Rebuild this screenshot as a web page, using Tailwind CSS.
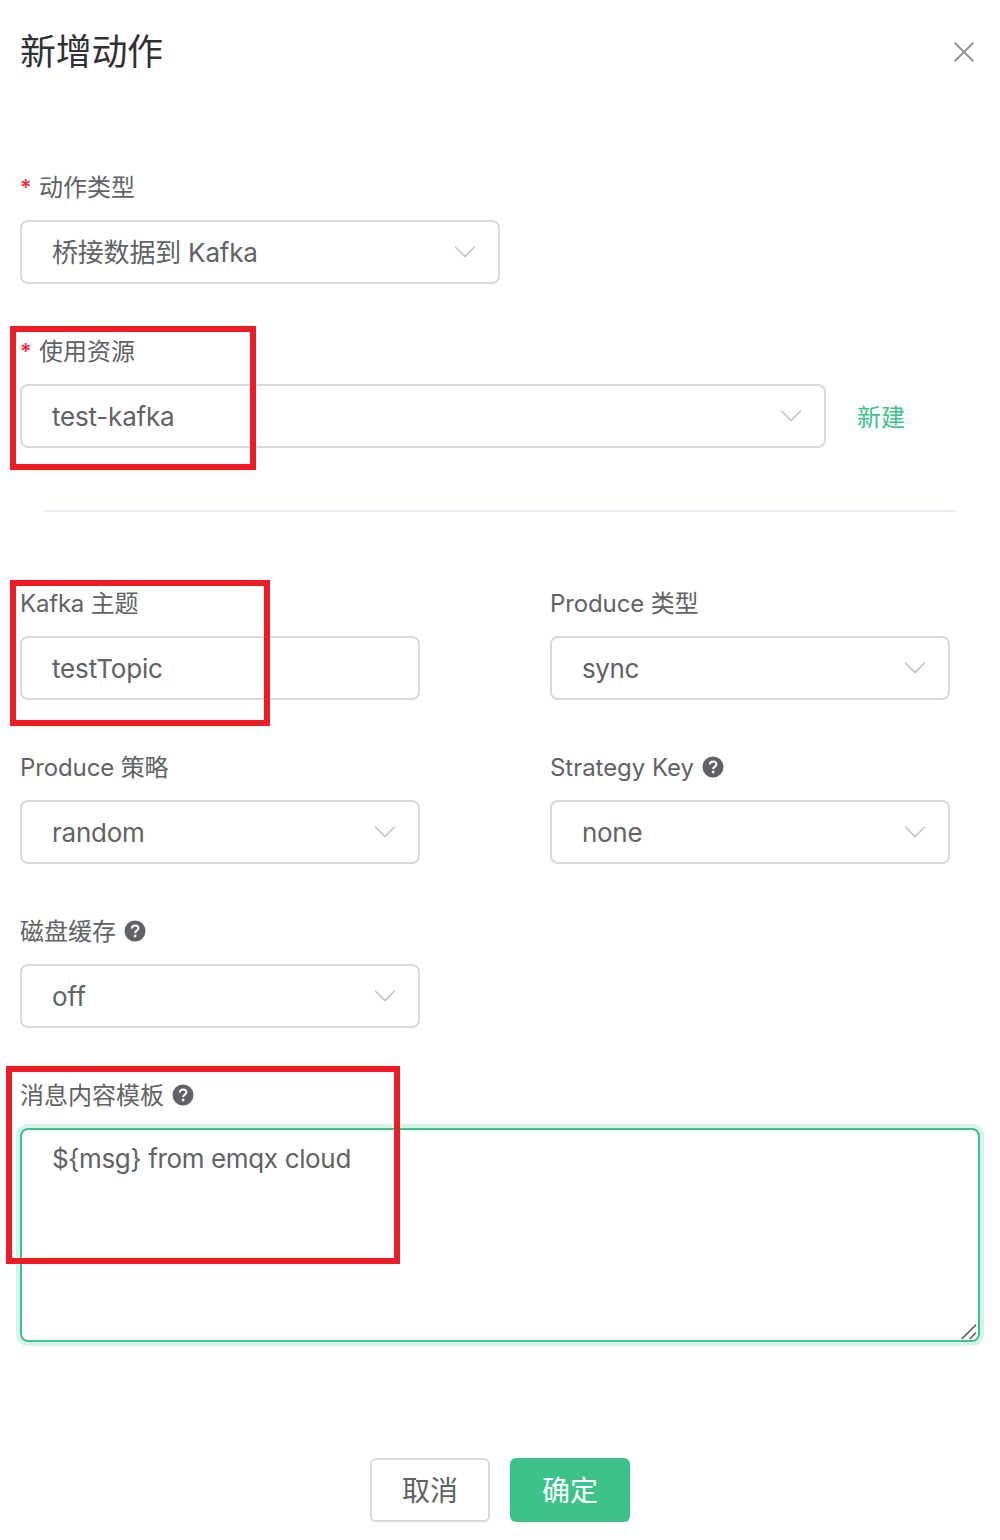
<!DOCTYPE html>
<html lang="zh-CN">
<head>
<meta charset="utf-8">
<title>新增动作</title>
<script src="https://cdn.jsdelivr.net/npm/@tailwindcss/browser@4"></script>
</head>
<body class="bg-white">
<svg class="hidden">
  <symbol id="chevron" viewBox="0 0 22 12"><path d="M1.5 1l9.5 9.6L20.5 1" fill="none" stroke="#c0c4cc" stroke-width="1.6" stroke-linecap="round" stroke-linejoin="round"/></symbol>
  <symbol id="help" viewBox="0 0 22 22"><circle cx="11" cy="11" r="10.5" fill="#606266"/><path d="M7.8 8.5C7.9 6.5 9.2 5.4 11.1 5.4s3.3 1.1 3.3 2.8c0 2.3-3.3 2.5-3.3 4.8" fill="none" stroke="#fff" stroke-width="2"/><circle cx="11.1" cy="16" r="1.4" fill="#fff"/></symbol>
</svg>
<main class="relative flex h-[1540px] w-[1000px] flex-col overflow-hidden bg-white px-5 font-['Inter','Noto_Sans_CJK_SC',sans-serif] text-2xl text-[#606266]">
  <header class="flex h-[156px] items-start justify-between pt-6">
    <h1 class="pt-px text-[36px] leading-[54px] tracking-[-0.3px] text-[#303133]">新增动作</h1>
    <svg class="mt-[18px] mr-[6px] size-5" viewBox="0 0 20 20" fill="none" stroke="#909399" stroke-width="2" stroke-linecap="round"><path d="M1.2 1.2l17.6 17.6M18.8 1.2L1.2 18.8"/></svg>
  </header>

  <section>
    <div class="flex h-16 items-center"><span class="w-[19px] text-[22px] font-medium text-[#f5222d]">*</span><span>动作类型</span></div>
    <div class="flex h-16 w-[480px] items-center justify-between rounded-lg border-2 border-[#d9d9d9] pr-[22px] pl-[30px] text-[26px]"><span class="pt-[3px] tracking-[-0.2px]">桥接数据到 Kafka</span><svg class="h-3 w-[22px]"><use href="#chevron"/></svg></div>
  </section>

  <section class="mt-9">
    <div class="flex h-16 items-center"><span class="w-[19px] text-[22px] font-medium text-[#f5222d]">*</span><span>使用资源</span></div>
    <div class="flex items-center">
      <div class="flex h-16 w-[806px] items-center justify-between rounded-lg border-2 border-[#d9d9d9] pr-[22px] pl-[30px] text-[26px]"><span class="pt-[3px] tracking-[-0.2px]">test-kafka</span><svg class="h-3 w-[22px]"><use href="#chevron"/></svg></div>
      <a class="ml-[31px] pt-[3px] text-[#3dc389]">新建</a>
    </div>
  </section>

  <hr class="mx-6 mt-[62px] mb-[60px] border-t-2 border-[#ebeef5]">

  <div class="grid grid-cols-[400px_400px] gap-x-[130px] gap-y-9">
    <section>
      <div class="flex h-16 items-center"><span class="tracking-[-0.2px]">Kafka 主题</span></div>
      <div class="flex h-16 items-center rounded-lg border-2 border-[#d9d9d9] pl-[30px] text-[26px]"><span class="pt-[3px] tracking-[-0.15px]">testTopic</span></div>
    </section>
    <section>
      <div class="flex h-16 items-center"><span class="tracking-[-0.12px]">Produce 类型</span></div>
      <div class="flex h-16 items-center justify-between rounded-lg border-2 border-[#d9d9d9] pr-[22px] pl-[30px] text-[26px]"><span class="pt-[3px] tracking-[-0.4px]">sync</span><svg class="h-3 w-[22px]"><use href="#chevron"/></svg></div>
    </section>
    <section>
      <div class="flex h-16 items-center"><span class="tracking-[-0.12px]">Produce 策略</span></div>
      <div class="flex h-16 items-center justify-between rounded-lg border-2 border-[#d9d9d9] pr-[22px] pl-[30px] text-[26px]"><span class="pt-[3px] tracking-[-0.25px]">random</span><svg class="h-3 w-[22px]"><use href="#chevron"/></svg></div>
    </section>
    <section>
      <div class="flex h-16 items-center gap-2"><span class="tracking-[-0.05px]">Strategy Key</span><svg class="mb-0.5 size-[22px]"><use href="#help"/></svg></div>
      <div class="flex h-16 items-center justify-between rounded-lg border-2 border-[#d9d9d9] pr-[22px] pl-[30px] text-[26px]"><span class="pt-[3px] tracking-[-0.3px]">none</span><svg class="h-3 w-[22px]"><use href="#chevron"/></svg></div>
    </section>
    <section>
      <div class="flex h-16 items-center gap-2"><span>磁盘缓存</span><svg class="mb-0.5 size-[22px]"><use href="#help"/></svg></div>
      <div class="flex h-16 items-center justify-between rounded-lg border-2 border-[#d9d9d9] pr-[22px] pl-[30px] text-[26px]"><span class="pt-[3px]">off</span><svg class="h-3 w-[22px]"><use href="#chevron"/></svg></div>
    </section>
  </div>

  <section class="mt-9">
    <div class="flex h-16 items-center gap-2"><span>消息内容模板</span><svg class="mb-0.5 size-[22px]"><use href="#help"/></svg></div>
    <div class="flex h-[214px] items-start justify-between rounded-lg border-2 border-[#3dc389] pt-[9px] pl-[30px] text-[26px] leading-[40px] shadow-[0_0_0_4px_#d8f3e7]"><span class="tracking-[-0.35px]">${msg} from emqx cloud</span><svg class="mr-px size-4 self-end" viewBox="0 0 16 16" fill="none" stroke="#555" stroke-width="1.6"><path d="M.8 15L15 .8M8.8 15L15 8.8"/></svg></div>
  </section>

  <footer class="mt-[116px] flex justify-center gap-5 text-[28px]">
    <button class="h-16 w-[120px] rounded-md border-2 border-[#d9d9d9] bg-white pt-[3px] shadow-[0_4px_0_rgba(0,0,0,0.015)]">取消</button>
    <button class="h-16 w-[120px] rounded-md bg-[#3dc389] pt-[3px] text-white shadow-[0_4px_0_rgba(0,0,0,0.015)]">确定</button>
  </footer>

  <!-- highlight frames over the form -->
  <div class="absolute top-[326px] left-[10px] h-36 w-[246px] border-6 border-[#ee1c25]"></div>
  <div class="absolute top-[580px] left-[10px] h-[146px] w-[260px] border-6 border-[#ee1c25]"></div>
  <div class="absolute top-[1066px] left-[6px] h-[198px] w-[394px] border-6 border-[#ee1c25]"></div>
</main>
</body>
</html>
